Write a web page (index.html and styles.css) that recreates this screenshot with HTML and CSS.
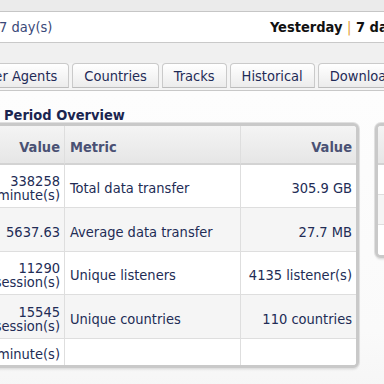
FILE: index.html
```html
<!DOCTYPE html>
<html>
<head>
<meta charset="utf-8">
<link rel="stylesheet" href="styles.css">
</head>
<body>
<div class="topstrip"></div>
<div class="periodbar">
  <div class="range">7 day(s)</div>
  <div class="quick">Yesterday <span class="sep">|</span> 7 days <span class="sep">|</span> 30 days</div>
</div>
<div class="tabs">
  <div class="tab">User Agents</div>
  <div class="tab">Countries</div>
  <div class="tab">Tracks</div>
  <div class="tab">Historical</div>
  <div class="tab">Downloads</div>
</div>
<div class="content">
  <h2 class="title">Period Overview</h2>
  <div class="panels">
    <div class="panel">
      <div class="grid main">
        <div class="th num">Value</div>
        <div class="th">Metric</div>
        <div class="th num last-col">Value</div>

        <div class="td num">338258 minute(s)</div>
        <div class="td">Total data transfer</div>
        <div class="td num last-col">305.9 GB</div>

        <div class="td num alt">5637.63</div>
        <div class="td alt">Average data transfer</div>
        <div class="td num alt last-col">27.7 MB</div>

        <div class="td num">11290 session(s)</div>
        <div class="td">Unique listeners</div>
        <div class="td num last-col">4135 listener(s)</div>

        <div class="td num alt">15545 session(s)</div>
        <div class="td alt">Unique countries</div>
        <div class="td num alt last-col">110 countries</div>

        <div class="td num end">minute(s)</div>
        <div class="td end"></div>
        <div class="td num end last-col"></div>
      </div>
    </div>
    <div class="panel side">
      <div class="grid sidegrid">
        <div class="th">&nbsp;</div>
        <div class="td">&nbsp;</div>
        <div class="td alt">&nbsp;</div>
        <div class="td end">&nbsp;</div>
      </div>
    </div>
  </div>
</div>
</body>
</html>
```

FILE: styles.css
```css
html, body {
  margin: 0;
  height: 100%;
  overflow: hidden;
}
body {
  font-family: "DejaVu Sans Condensed", "DejaVu Sans", sans-serif;
  font-stretch: condensed;
  font-size: 14.5px;
  color: #222c55;
  background: #f0f0f0;
}
.topstrip {
  height: 11px;
  background: #ebebeb;
  border-bottom: 1px solid #c6c6c6;
}
.periodbar {
  height: 30px;
  background: #ffffff;
  border-bottom: 1px solid #c9c9c9;
  display: grid;
  grid-template-columns: 270px max-content;
  align-items: center;
  white-space: nowrap;
  overflow: hidden;
}
.range {
  margin-left: -1px;
  color: #3a4878;
}
.quick {
  font-weight: bold;
  color: #111111;
}
.sep {
  font-weight: normal;
  color: #e39a2e;
}
.tabs {
  display: flex;
  gap: 3px;
  margin: 20px 0 0 -34px;
  padding-bottom: 2px;
  border-bottom: 1px solid #c8c8c8;
  background: #f4f4f4;
}
.tab {
  flex-shrink: 0;
  height: 21px;
  line-height: 21px;
  padding: 2px 11px 0;
  border: 1px solid #cacaca;
  border-bottom-color: #bcbcbc;
  border-radius: 4px 4px 0 0;
  background: linear-gradient(#ffffff, #ececec);
  color: #1f2b57;
  white-space: nowrap;
}
.content {
  background: linear-gradient(#fdfdfd, #fafafa 60%, #efefef);
  padding-top: 16px;
  height: 100%;
}
.title {
  margin: 0 0 0 4px;
  font-size: 14.5px;
  line-height: 16px;
  font-weight: bold;
  color: #1a2550;
}
.panels {
  display: flex;
  align-items: flex-start;
  gap: 16px;
  margin-left: -40px;
}
.panel {
  flex-shrink: 0;
  border: 3px solid #c9c9c9;
  border-radius: 6px;
  background: #ffffff;
  box-shadow: 0 0 0 1px #e0e0e0, 0 2px 2px rgba(0, 0, 0, 0.08);
  overflow: hidden;
}
.grid {
  display: grid;
}
.main {
  grid-template-columns: 102px 176px 115px;
  grid-template-rows: 39px 43px 44px 43px 44px 26px;
}
.sidegrid {
  width: 200px;
  grid-template-rows: 39px 30px 30px 30px;
}
.th, .td {
  box-sizing: border-box;
  display: flex;
  align-items: center;
  padding: 4px 4px 0 5px;
  line-height: 14px;
  border-right: 1px solid #dedede;
}
.th {
  font-weight: bold;
  color: #4a5174;
  background: linear-gradient(#f4f4f4, #e6e6e6);
  border-bottom: 2px solid #d3d3d3;
}
.td {
  background: #ffffff;
  border-bottom: 1px solid #dedede;
}
.td.alt {
  background: #f5f5f5;
}
.td.end {
  border-bottom: 0;
}
.num {
  justify-content: flex-end;
  text-align: right;
}
.last-col {
  border-right: 0;
}
```
